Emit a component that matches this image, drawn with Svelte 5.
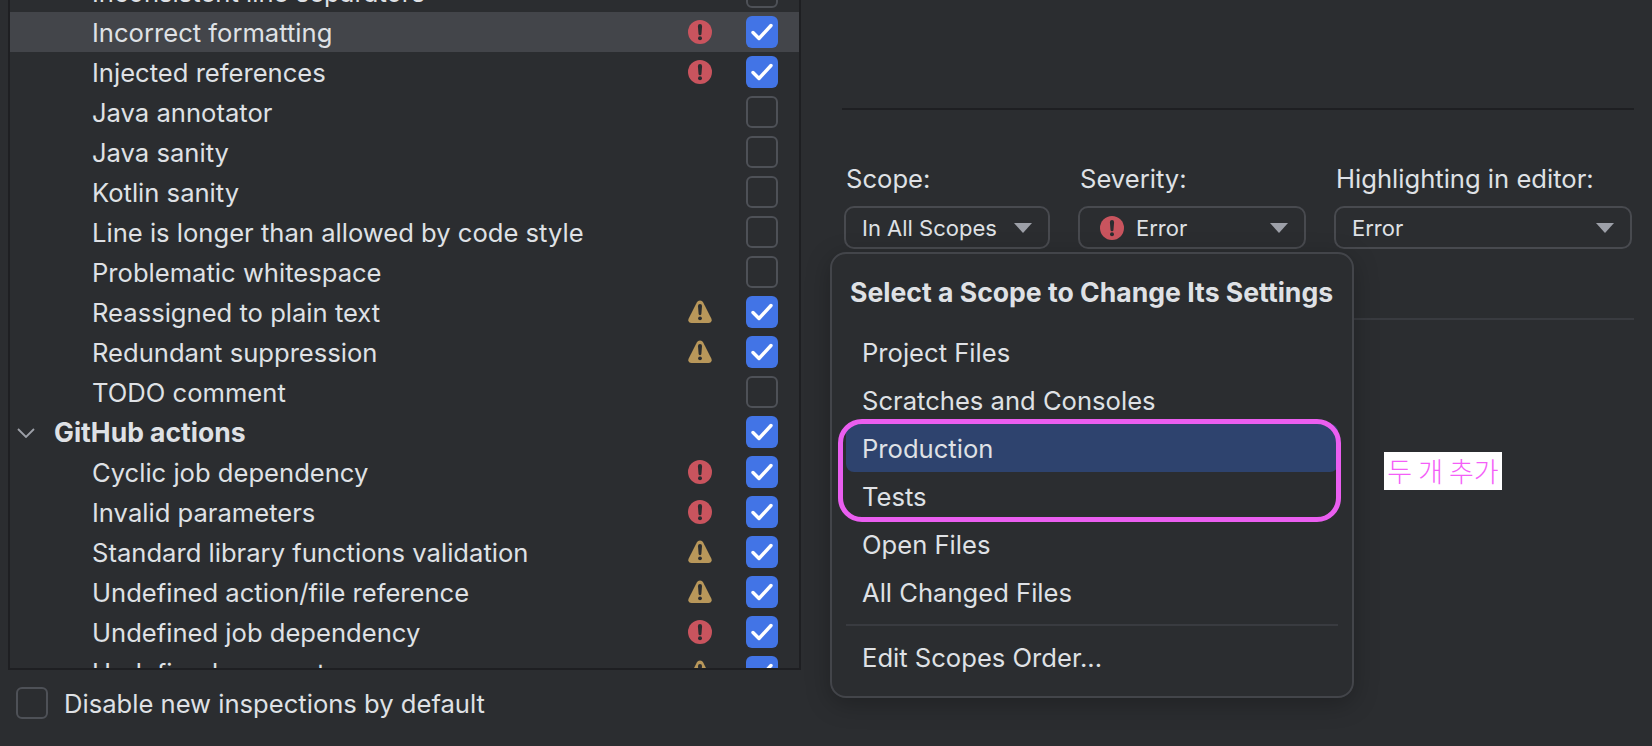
<script>
	const rows = [
		{ name: 'Inconsistent line separators', on: false },
		{ name: 'Incorrect formatting', level: 'error', on: true, active: true },
		{ name: 'Injected references', level: 'error', on: true },
		{ name: 'Java annotator', on: false },
		{ name: 'Java sanity', on: false },
		{ name: 'Kotlin sanity', on: false },
		{ name: 'Line is longer than allowed by code style', on: false },
		{ name: 'Problematic whitespace', on: false },
		{ name: 'Reassigned to plain text', level: 'warn', on: true },
		{ name: 'Redundant suppression', level: 'warn', on: true },
		{ name: 'TODO comment', on: false },
		{ name: 'GitHub actions', group: true, on: true },
		{ name: 'Cyclic job dependency', level: 'error', on: true },
		{ name: 'Invalid parameters', level: 'error', on: true },
		{ name: 'Standard library functions validation', level: 'warn', on: true },
		{ name: 'Undefined action/file reference', level: 'warn', on: true },
		{ name: 'Undefined job dependency', level: 'error', on: true },
		{ name: 'Undefined parameters', level: 'warn', on: true }
	];

	const scopes = ['Project Files', 'Scratches and Consoles', 'Production', 'Tests', 'Open Files', 'All Changed Files'];
</script>

{#snippet errorIcon()}
	<svg class="icon" viewBox="0 0 24 24">
		<circle cx="12" cy="12" r="12" fill="#c9545e" />
		<path d="M9.900 6.200a2.100 2.100 0 0 1 4.200 0l-.6 7.600a1.500 1.500 0 0 1-3 0z" fill="#2b2d30" />
		<circle cx="12" cy="18.200" r="2" fill="#2b2d30" />
	</svg>
{/snippet}

{#snippet warnIcon()}
	<svg class="icon" viewBox="0 0 24 24">
		<path d="M12 0.500c1.400 0 2.500.8 3.200 2.100l8.100 16c1.100 2.300-.3 4.400-2.800 4.400H3.500C1 23-.4 20.900.7 18.600l8.100-16C9.500 1.300 10.600.5 12 .5z" fill="#b8975a" />
		<path d="M10 6a2 2 0 0 1 4 0l-.6 7.800a1.400 1.400 0 0 1-2.800 0z" fill="#2b2d30" />
		<circle cx="12" cy="18.300" r="1.900" fill="#2b2d30" />
	</svg>
{/snippet}

{#snippet checkbox(on)}
	{#if on}
		<span class="check on">
			<svg viewBox="0 0 32 32"><path d="M7 16.500l6 6L25 9.500" fill="none" stroke="#fff" stroke-width="3.400" stroke-linecap="round" stroke-linejoin="round" /></svg>
		</span>
	{:else}
		<span class="check"></span>
	{/if}
{/snippet}

<div class="page">
	<div class="left">
		<div class="tree">
			<div class="tree-inner">
				{#each rows as row}
					<div class="row" class:active={row.active} class:group={row.group}>
						{#if row.group}
							<svg class="chevron" viewBox="0 0 18 10"><path d="M1 1l8 8 8-8" fill="none" stroke="#9da0a8" stroke-width="1.800" /></svg>
						{/if}
						<span class="name">{row.name}</span>
						<span class="level">
							{#if row.level === 'error'}
								{@render errorIcon()}
							{:else if row.level === 'warn'}
								{@render warnIcon()}
							{/if}
						</span>
						{@render checkbox(row.on)}
					</div>
				{/each}
			</div>
		</div>
		<div class="disable">
			{@render checkbox(false)}
			<span>Disable new inspections by default</span>
		</div>
	</div>

	<div class="right">
		<hr class="rule first" />
		<div class="fields">
			<div class="field scope">
				<div class="label">Scope:</div>
				<div class="select">
					<span class="value">In All Scopes</span>
					<span class="caret"></span>
				</div>
			</div>
			<div class="field severity">
				<div class="label">Severity:</div>
				<div class="select">
					{@render errorIcon()}
					<span class="value">Error</span>
					<span class="caret"></span>
				</div>
			</div>
			<div class="field editor">
				<div class="label">Highlighting in editor:</div>
				<div class="select">
					<span class="value">Error</span>
					<span class="caret"></span>
				</div>
			</div>
		</div>
		<hr class="rule second" />
	</div>

	<div class="popup">
		<div class="title">Select a Scope to Change Its Settings</div>
		{#each scopes as scope}
			<div class="item" class:selected={scope === 'Production'}>{scope}</div>
		{/each}
		<div class="sep"></div>
		<div class="item">Edit Scopes Order...</div>
	</div>

	<div class="mark"></div>
	<div class="note">두 개 추가</div>
</div>

<style>
	:global(body) {
		background: #2b2d30;
	}

	.page {
		position: relative;
		display: flex;
		width: 1652px;
		height: 746px;
		overflow: hidden;
		background: #2b2d30;
		color: #dfe1e5;
		font-family: Inter, 'Noto Sans', sans-serif;
		font-size: 25.6px;
	}

	.left {
		width: 801px;
		flex: none;
		padding-left: 8px;
		box-sizing: border-box;
	}

	.tree {
		height: 670px;
		overflow: hidden;
		border: 2px solid #1e1f22;
		border-top: 0;
		box-sizing: border-box;
	}

	.tree-inner {
		margin-top: -28px;
	}

	.row {
		position: relative;
		display: flex;
		align-items: center;
		height: 40px;
		padding-left: 82px;
	}

	.row.active {
		background: #43454a;
	}

	.row.group {
		padding-left: 44px;
		font-size: 26.5px;
		font-weight: 700;
	}

	.chevron {
		position: absolute;
		left: 7px;
		top: 16px;
		width: 18px;
		height: 10px;
	}

	.name {
		flex: 1;
		white-space: nowrap;
	}

	.level {
		width: 24px;
		height: 24px;
		margin-right: 34px;
	}

	.icon {
		display: block;
		width: 24px;
		height: 24px;
		flex: none;
	}

	.check {
		display: block;
		flex: none;
		width: 32px;
		height: 32px;
		margin-right: 21px;
		border: 2px solid #4e5157;
		border-radius: 6px;
		box-sizing: border-box;
	}

	.check.on {
		background: #4274e6;
		border: 0;
	}

	.check svg {
		display: block;
		width: 32px;
		height: 32px;
	}

	.disable {
		display: flex;
		align-items: center;
		gap: 16px;
		margin: 17px 0 0 8px;
	}

	.disable .check {
		margin: 0;
	}

	.right {
		flex: 1;
		padding: 0 18px 0 41px;
	}

	.rule {
		margin: 0;
		border: 0;
		height: 2px;
		background: #1e1f22;
	}

	.rule.first {
		margin-top: 108px;
	}

	.rule.second {
		margin-top: 69px;
		background: #393b40;
	}

	.fields {
		display: flex;
		gap: 28px;
		margin: 54px 0 0 2px;
	}

	.label {
		padding-left: 2px;
		font-size: 25.6px;
		line-height: 30px;
		white-space: nowrap;
	}

	.select {
		display: flex;
		align-items: center;
		height: 43px;
		margin-top: 12px;
		padding: 0 16px;
		border: 2px solid #484a4f;
		border-radius: 10px;
		box-sizing: border-box;
		font-size: 22px;
	}

	.scope .select {
		width: 206px;
	}

	.severity .select {
		width: 228px;
		padding-left: 20px;
	}

	.severity .value {
		margin-left: 12px;
	}

	.editor .select {
		width: 298px;
	}

	.value {
		flex: 1;
		white-space: nowrap;
	}

	.caret {
		width: 0;
		height: 0;
		border-left: 9px solid transparent;
		border-right: 9px solid transparent;
		border-top: 10px solid #9da0a8;
	}

	.popup {
		position: absolute;
		left: 830px;
		top: 252px;
		width: 524px;
		height: 446px;
		padding: 20px 14px 0;
		background: #2b2d30;
		border: 2px solid #43454a;
		border-radius: 16px;
		box-sizing: border-box;
		box-shadow: 0 6px 24px rgba(0, 0, 0, 0.25);
	}

	.title {
		height: 38px;
		padding-left: 4px;
		font-size: 26.6px;
		font-weight: 700;
		line-height: 36px;
		white-space: nowrap;
	}

	.item {
		height: 48px;
		padding-left: 16px;
		border-radius: 8px;
		line-height: 50px;
		font-size: 25.6px;
	}

	.title + .item {
		margin-top: 16px;
	}

	.item.selected {
		background: #2e436e;
	}

	.sep {
		height: 2px;
		margin: 8px 0 7px;
		background: #393b40;
	}

	.mark {
		position: absolute;
		left: 838px;
		top: 419px;
		width: 503px;
		height: 103px;
		border: 5px solid #ea5ef0;
		border-radius: 24px;
		box-sizing: border-box;
	}

	.note {
		position: absolute;
		left: 1384px;
		top: 452px;
		width: 118px;
		height: 38px;
		background: #fff;
		color: #f45ef8;
		font-family: 'Noto Sans CJK KR', sans-serif;
		font-size: 27px;
		font-weight: 300;
		line-height: 38px;
		text-align: center;
		white-space: nowrap;
	}
</style>
